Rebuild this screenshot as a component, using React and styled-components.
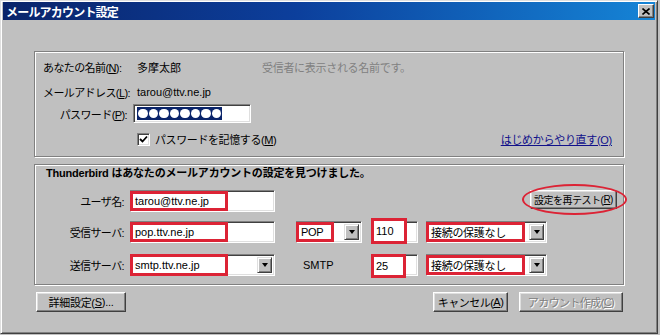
import React from 'react'
import styled, { createGlobalStyle } from 'styled-components'

const Global = createGlobalStyle`
   body {
      margin: 0;
      background: #c0c0c0;
      font-family: "Liberation Sans", "Noto Sans CJK JP", sans-serif;
      font-size: 11px;
      color: #000;
   }
`

const Window = styled.div`
   width: 658px;
   height: 334px;
   box-sizing: border-box;
   background: #c0c0c0;
   border: 1px solid;
   border-color: #dfdfdf #404040 #404040 #dfdfdf;
   box-shadow: inset 1px 1px #fff, inset -1px -1px #808080;
   padding: 1px 2px 2px 2px;
   display: flex;
   flex-direction: column;
`

const TitleBar = styled.div`
   height: 18px;
   display: flex;
   align-items: center;
   justify-content: space-between;
   padding: 0 1px 0 3px;
   background: linear-gradient(to right, #0a246a 0%, #0c3f9c 45%, #1584d6 100%);
   color: #fff;
   font-family: "Noto Sans CJK JP", sans-serif;
   font-weight: bold;
   font-size: 12px;
   letter-spacing: -0.8px;
`

const CloseBtn = styled.div`
   width: 16px;
   height: 14px;
   box-sizing: border-box;
   background: #c0c0c0;
   border: 1px solid;
   border-color: #fff #404040 #404040 #fff;
   box-shadow: inset -1px -1px #808080;
   display: flex;
   align-items: center;
   justify-content: center;
`

const Body = styled.div`
   display: flex;
   flex-direction: column;
   padding: 31px 0 0 31px;
`

const Group = styled.div`
   width: 590px;
   height: ${p => p.$h}px;
   box-sizing: border-box;
   border: 1px solid #808080;
   box-shadow: 1px 1px 0 #fff, inset 1px 1px 0 #fff;
   margin-top: ${p => p.$mt || 0}px;
   padding: ${p => p.$pad};
   display: flex;
   flex-direction: column;
`

const Row = styled.div`
   display: flex;
   align-items: center;
   height: ${p => p.$h}px;
   margin-top: ${p => p.$mt || 0}px;
   white-space: nowrap;
`

const Label = styled.div`
   width: ${p => p.$w}px;
   flex: none;
   box-sizing: border-box;
   text-align: ${p => p.$align || 'left'};
   padding-right: ${p => p.$pr || 0}px;
   letter-spacing: -0.6px;
`

const Value = styled.div`
   padding-left: 4px;
   width: ${p => (p.$w ? `${p.$w}px` : 'auto')};
   flex: none;
`

const Hint = styled.div`
   color: #808080;
   letter-spacing: -0.3px;
`

const Sunken = styled.div`
   position: relative;
   width: ${p => p.$w}px;
   height: ${p => p.$h || 22}px;
   margin-left: ${p => p.$ml || 0}px;
   flex: none;
   box-sizing: border-box;
   background: #fff;
   border: 1px solid;
   border-color: #808080 #fff #fff #808080;
   box-shadow: inset 1px 1px #404040, inset -1px -1px #dfdfdf;
   display: flex;
   align-items: center;
`

const PassSel = styled.span`
   margin-left: 3px;
   height: 13px;
   background: #0a246a;
   display: flex;
   align-items: center;
   gap: 1px;
   padding: 0 1px;
`

const Dot = styled.span`
   width: 9.5px;
   height: 9.5px;
   border-radius: 50%;
   background: #fff;
`

const Mark = styled.div`
   width: ${p => p.$w}px;
   align-self: stretch;
   box-sizing: border-box;
   border: 3px solid #dc2335;
   margin: ${p => p.$ext || 0}px 0 ${p => p.$extB || 0}px -1px;
   display: flex;
   align-items: center;
   padding-left: 2px;
   background: #fff;
   letter-spacing: ${p => p.$ls || 0}px;
`

const Arrow = styled.div`
   position: absolute;
   right: 2px;
   top: 2px;
   bottom: 2px;
   width: 15px;
   box-sizing: border-box;
   background: #c0c0c0;
   border: 1px solid;
   border-color: #dfdfdf #404040 #404040 #dfdfdf;
   box-shadow: inset 1px 1px #fff, inset -1px -1px #808080;
   display: flex;
   align-items: center;
   justify-content: center;
   &::after {
      content: '';
      border-left: 3.5px solid transparent;
      border-right: 3.5px solid transparent;
      border-top: 4px solid #000;
   }
`

const Button = styled.div`
   width: ${p => p.$w}px;
   height: ${p => p.$h || 20}px;
   margin-left: ${p => p.$ml || 0}px;
   flex: none;
   box-sizing: border-box;
   background: #c0c0c0;
   border: 1px solid;
   border-color: #fff #404040 #404040 #fff;
   box-shadow: inset -1px -1px #808080, inset 1px 1px #dfdfdf;
   display: flex;
   align-items: center;
   justify-content: center;
   white-space: nowrap;
   font-size: ${p => p.$fs || 11}px;
   letter-spacing: ${p => p.$ls || 0}px;
   color: ${p => (p.$disabled ? '#808080' : '#000')};
   text-shadow: ${p => (p.$disabled ? '1px 1px 0 #fff' : 'none')};
`

const CheckBox = styled.div`
   width: 13px;
   height: 13px;
   box-sizing: border-box;
   background: #fff;
   border: 1px solid;
   border-color: #808080 #fff #fff #808080;
   box-shadow: inset 1px 1px #404040, inset -1px -1px #dfdfdf;
   display: flex;
   align-items: center;
   justify-content: center;
   margin-right: 5px;
`

const CheckText = styled.span`
   letter-spacing: -0.4px;
`

const LinkText = styled.a`
   margin-left: auto;
   margin-right: 11px;
   color: #10108a;
   text-decoration: underline;
   letter-spacing: -0.3px;
`

const Heading = styled.div`
   font-weight: bold;
   height: 16px;
   line-height: 16px;
   padding-left: 11px;
   letter-spacing: -0.2px;
`

const RetestWrap = styled.div`
   position: relative;
   margin-left: auto;
   margin-right: 6px;
   align-self: flex-start;
`

const Ellipse = styled.div`
   position: absolute;
   left: -8px;
   top: -6px;
   width: 105px;
   height: 31px;
   box-sizing: border-box;
   border: 2px solid #dc2335;
   border-radius: 50%;
   pointer-events: none;
`

const Footer = styled.div`
   width: 590px;
   display: flex;
   align-items: center;
   margin-top: 7px;
`

const SmtpLabel = styled.div`
   width: 66px;
   margin-left: 21px;
   padding-left: 7px;
   box-sizing: border-box;
   flex: none;
`

const Mn = ({ k }) => (
   <>(<u>{k}</u>)</>
)

const Select = ({ w, ml, markW, text, ext, extB }) => (
   <Sunken $w={w} $ml={ml}>
      <Mark $w={markW} $ext={ext} $extB={extB} $ls={-0.3}>{text}</Mark>
      <Arrow />
   </Sunken>
)

const App = () => {
   return (
      <>
         <Global />
         <Window>
            <TitleBar>
               <span>メールアカウント設定</span>
               <CloseBtn>
                  <svg width="8" height="7" viewBox="0 0 8 7">
                     <path d="M0.5 0.5 L7.5 6.5 M7.5 0.5 L0.5 6.5" stroke="#000" strokeWidth="1.6" />
                  </svg>
               </CloseBtn>
            </TitleBar>
            <Body>
               <Group $h={106} $pad="7px 0 0 8px">
                  <Row $h={16}>
                     <Label $w={90}>あなたの名前<Mn k="N" />:</Label>
                     <Value $w={125}>多摩太郎</Value>
                     <Hint>受信者に表示される名前です。</Hint>
                  </Row>
                  <Row $h={16} $mt={9}>
                     <Label $w={90}>メールアドレス<Mn k="L" />:</Label>
                     <Value>tarou@ttv.ne.jp</Value>
                  </Row>
                  <Row $h={19} $mt={4}>
                     <Label $w={90} $align="right" $pr={6}>パスワード<Mn k="P" />:</Label>
                     <Sunken $w={118} $h={19}>
                        <PassSel>
                           {Array.from({ length: 8 }, (_, i) => <Dot key={i} />)}
                        </PassSel>
                     </Sunken>
                  </Row>
                  <Row $h={16} $mt={8}>
                     <Label $w={94} />
                     <CheckBox>
                        <svg width="9" height="9" viewBox="0 0 9 9">
                           <path d="M1 4 L3.5 6.5 L8 1.5" stroke="#000" strokeWidth="1.8" fill="none" />
                        </svg>
                     </CheckBox>
                     <CheckText>パスワードを記憶する<Mn k="M" /></CheckText>
                     <LinkText>はじめからやり直す(O)</LinkText>
                  </Row>
               </Group>
               <Group $h={121} $mt={7} $pad="0">
                  <Heading>Thunderbird はあなたのメールアカウントの設定を見つけました。</Heading>
                  <Row $h={22} $mt={9}>
                     <Label $w={95} $align="right" $pr={6}>ユーザ名:</Label>
                     <Sunken $w={145}>
                        <Mark $w={98}>tarou@ttv.ne.jp</Mark>
                     </Sunken>
                     <RetestWrap>
                        <Button $w={87} $h={19} $fs={10} $ls={-0.5}>設定を再テスト<Mn k="R" /></Button>
                        <Ellipse />
                     </RetestWrap>
                  </Row>
                  <Row $h={22} $mt={9}>
                     <Label $w={95} $align="right" $pr={6}>受信サーバ:</Label>
                     <Sunken $w={145}>
                        <Mark $w={98}>pop.ttv.ne.jp</Mark>
                     </Sunken>
                     <Select w={66} ml={21} markW={38} text="POP" />
                     <Sunken $w={47} $ml={9}>
                        <Mark $w={36} $ext={-4} $extB={-2}>110</Mark>
                     </Sunken>
                     <Select w={121} ml={8} markW={99} text="接続の保護なし" />
                  </Row>
                  <Row $h={22} $mt={11}>
                     <Label $w={95} $align="right" $pr={6}>送信サーバ:</Label>
                     <Sunken $w={145}>
                        <Mark $w={98} $ext={-1} $extB={-1}>smtp.ttv.ne.jp</Mark>
                        <Arrow />
                     </Sunken>
                     <SmtpLabel>SMTP</SmtpLabel>
                     <Sunken $w={47} $ml={9}>
                        <Mark $w={35} $ext={-1} $extB={-3}>25</Mark>
                     </Sunken>
                     <Select w={121} ml={8} markW={99} text="接続の保護なし" />
                  </Row>
               </Group>
               <Footer>
                  <Button $w={90} $ml={2} $ls={-0.3}>詳細設定<Mn k="S" />...</Button>
                  <Button $w={75} $ml={307} $ls={-0.5}>キャンセル<Mn k="A" /></Button>
                  <Button $w={104} $ml={11} $ls={-0.6} $disabled>アカウント作成<Mn k="C" /></Button>
               </Footer>
            </Body>
         </Window>
      </>
   )
}

export default App
